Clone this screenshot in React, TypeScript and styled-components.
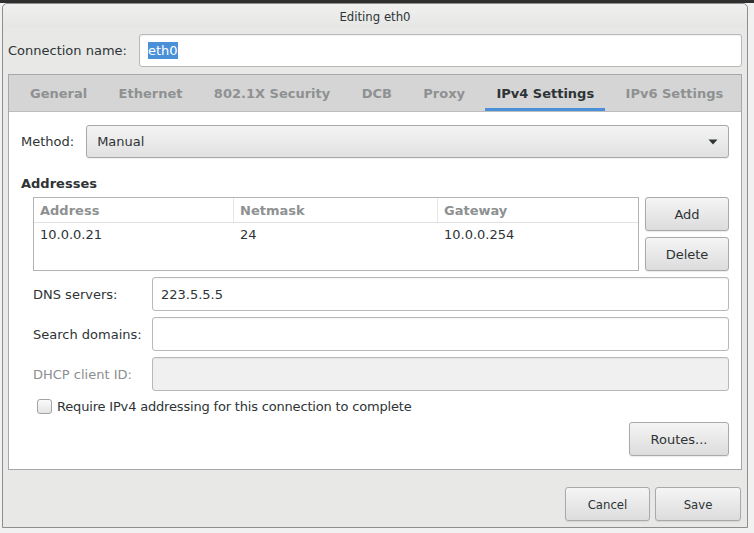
import React from 'react'
import styled, { createGlobalStyle } from 'styled-components'

const GlobalStyle = createGlobalStyle`
  html, body {
    margin: 0;
    padding: 0;
  }
  body {
    background: #f1f1f1 linear-gradient(#2f2f2f 0 3px, #f1f1f1 3px) no-repeat;
    font-family: "DejaVu Sans", "Liberation Sans", sans-serif;
    font-size: 13px;
    color: #2e3436;
  }
`

const Desktop = styled.div`
  padding: 3px 0 0 2px;
  height: 533px;
  box-sizing: border-box;
`

const Window = styled.div`
  width: 746px;
  height: 525px;
  box-sizing: border-box;
  border: 1px solid #8e8e8e;
  border-radius: 5px 5px 0 0;
  background: #e8e8e7;
  display: flex;
  flex-direction: column;
`

const TitleBar = styled.div`
  height: 24px;
  display: flex;
  align-items: center;
  justify-content: center;
  background: linear-gradient(#f0f0ef, #e6e6e5);
  border-radius: 5px 5px 0 0;
  font-family: "DejaVu Sans Condensed", "DejaVu Sans", sans-serif;
  font-size: 13px;
  color: #2e3436;
`

const Body = styled.div`
  flex: 1;
  display: flex;
  flex-direction: column;
  padding: 6px 5px 0 5px;
`

const NameRow = styled.div`
  display: flex;
  align-items: center;
  gap: 12px;
`

const Label = styled.span<{ disabled?: boolean; tight?: boolean }>`
  white-space: nowrap;
  color: ${(p) => (p.disabled ? '#8b8e8f' : '#2e3436')};
  letter-spacing: ${(p) => (p.tight ? '-0.18px' : 'normal')};
`

const TextField = styled.div<{ disabled?: boolean; h?: number }>`
  flex: 1;
  height: ${(p) => p.h ?? 33}px;
  box-sizing: border-box;
  border: 1px solid #b8b8b8;
  border-radius: 3px;
  background: ${(p) => (p.disabled ? '#f0f0f0' : '#ffffff')};
  display: flex;
  align-items: center;
  padding: 0 8px;
  box-shadow: inset 0 1px 1px rgba(0, 0, 0, 0.05);
`

const Selected = styled.span`
  background: #4a90d9;
  color: #ffffff;
  padding: 1px 0;
`

const Notebook = styled.div`
  margin-top: 7px;
  border: 1px solid #a7a7a7;
  display: flex;
  flex-direction: column;
  height: 396px;
  box-sizing: border-box;
`

const TabBar = styled.div`
  height: 37px;
  box-sizing: border-box;
  background: #d5d5d5;
  border-bottom: 1px solid #bdbdbd;
  display: flex;
  align-items: stretch;
  gap: 9.4px;
  padding-left: 10px;
`

const Tab = styled.div<{ active?: boolean }>`
  padding: 0 11px;
  display: flex;
  align-items: center;
  font-weight: bold;
  font-size: 13px;
  color: ${(p) => (p.active ? '#2e3436' : '#8e9192')};
  box-shadow: ${(p) => (p.active ? 'inset 0 -3px 0 #4a90d9' : 'none')};
`

const Panel = styled.div`
  flex: 1;
  background: #ffffff;
  padding: 13px 12px 12px 12px;
  display: flex;
  flex-direction: column;
`

const MethodRow = styled.div`
  display: flex;
  align-items: center;
  gap: 12px;
`

const Combo = styled.div`
  flex: 1;
  height: 33px;
  box-sizing: border-box;
  border: 1px solid #a8a8a8;
  border-radius: 3px;
  background: linear-gradient(#f4f4f4, #e1e1e1);
  display: flex;
  align-items: center;
  justify-content: space-between;
  padding: 0 10px;
  box-shadow: 0 1px 1px rgba(0, 0, 0, 0.06);
`

const SectionTitle = styled.div`
  font-weight: bold;
  margin-top: 18px;
  line-height: 16px;
`

const Section = styled.div`
  padding-left: 12px;
  display: flex;
  flex-direction: column;
`

const AddressRow = styled.div`
  margin-top: 5px;
  display: flex;
  gap: 6px;
`

const Table = styled.div`
  width: 606px;
  height: 74px;
  box-sizing: border-box;
  border: 1px solid #b4b4b4;
  display: grid;
  grid-template-columns: 200px 204px 1fr;
  grid-template-rows: 25px 22px 1fr;
`

const HeadCell = styled.div<{ last?: boolean }>`
  display: flex;
  align-items: center;
  padding-left: 6px;
  font-weight: bold;
  color: #8e9192;
  border-bottom: 1px solid #e0e0e0;
  border-right: ${(p) => (p.last ? 'none' : '1px solid #e6e6e6')};
`

const Cell = styled.div`
  display: flex;
  align-items: center;
  padding-left: 6px;
`

const SideButtons = styled.div`
  display: flex;
  flex-direction: column;
  gap: 6px;
`

const Button = styled.div<{ w: number; h: number; condensed?: boolean }>`
  width: ${(p) => p.w}px;
  height: ${(p) => p.h}px;
  box-sizing: border-box;
  border: 1px solid #a9a9a9;
  border-radius: 3px;
  background: linear-gradient(#f5f5f5, #dcdcdc);
  box-shadow: 0 1px 1px rgba(0, 0, 0, 0.08);
  display: flex;
  align-items: center;
  justify-content: center;
  font-family: ${(p) =>
    p.condensed ? '"DejaVu Sans Condensed", "DejaVu Sans", sans-serif' : 'inherit'};
  color: #2e3436;
`

const Fields = styled.div`
  margin-top: 6px;
  display: grid;
  grid-template-columns: 119px 1fr;
  row-gap: 6px;
  align-items: center;
`

const CheckRow = styled.div`
  margin-top: 8px;
  display: flex;
  align-items: center;
  gap: 5px;
  padding-left: 4px;
`

const CheckBox = styled.div`
  width: 15px;
  height: 15px;
  box-sizing: border-box;
  border: 1px solid #a3a3a3;
  border-radius: 3px;
  background: linear-gradient(#fafafa, #e4e4e4);
`

const RoutesRow = styled.div`
  margin-top: 8px;
  display: flex;
  justify-content: flex-end;
`

const Footer = styled.div`
  margin-top: 17px;
  display: flex;
  justify-content: flex-end;
  gap: 5px;
  padding-right: 1px;
`

const tabs = ['General', 'Ethernet', '802.1X Security', 'DCB', 'Proxy', 'IPv4 Settings', 'IPv6 Settings']

export default function App() {
  return (
    <>
      <GlobalStyle />
      <Desktop>
        <Window>
          <TitleBar>Editing eth0</TitleBar>
          <Body>
            <NameRow>
              <Label>Connection name:</Label>
              <TextField>
                <Selected>eth0</Selected>
              </TextField>
            </NameRow>

            <Notebook>
              <TabBar>
                {tabs.map((t) => (
                  <Tab key={t} active={t === 'IPv4 Settings'}>{t}</Tab>
                ))}
              </TabBar>
              <Panel>
                <MethodRow>
                  <Label>Method:</Label>
                  <Combo>
                    <span>Manual</span>
                    <svg width="10" height="6" viewBox="0 0 10 6">
                      <path d="M0.5 0.5 L9.5 0.5 L5 5.5 Z" fill="#2e3436" />
                    </svg>
                  </Combo>
                </MethodRow>

                <SectionTitle>Addresses</SectionTitle>
                <Section>
                  <AddressRow>
                    <Table>
                      <HeadCell>Address</HeadCell>
                      <HeadCell>Netmask</HeadCell>
                      <HeadCell last>Gateway</HeadCell>
                      <Cell>10.0.0.21</Cell>
                      <Cell>24</Cell>
                      <Cell>10.0.0.254</Cell>
                    </Table>
                    <SideButtons>
                      <Button w={84} h={34}>Add</Button>
                      <Button w={84} h={34}>Delete</Button>
                    </SideButtons>
                  </AddressRow>

                  <Fields>
                    <Label>DNS servers:</Label>
                    <TextField h={34}>223.5.5.5</TextField>
                    <Label>Search domains:</Label>
                    <TextField h={34} />
                    <Label disabled>DHCP client ID:</Label>
                    <TextField h={34} disabled />
                  </Fields>

                  <CheckRow>
                    <CheckBox />
                    <Label tight>Require IPv4 addressing for this connection to complete</Label>
                  </CheckRow>

                  <RoutesRow>
                    <Button w={100} h={34}>Routes...</Button>
                  </RoutesRow>
                </Section>
              </Panel>
            </Notebook>

            <Footer>
              <Button w={85} h={34} condensed>Cancel</Button>
              <Button w={86} h={34} condensed>Save</Button>
            </Footer>
          </Body>
        </Window>
      </Desktop>
    </>
  )
}
